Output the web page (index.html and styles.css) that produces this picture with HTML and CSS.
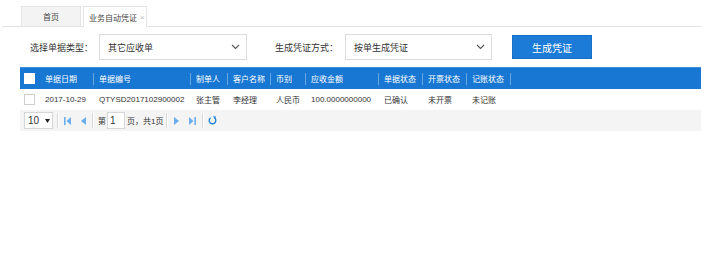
FILE: index.html
```html
<!DOCTYPE html>
<html lang="zh-CN">
<head>
<meta charset="utf-8">
<title>业务自动凭证</title>
<link rel="stylesheet" href="styles.css">
</head>
<body>
<div class="tabs">
  <div class="tab">首页</div>
  <div class="tab active">业务自动凭证<span class="close">×</span></div>
</div>

<div class="toolbar">
  <span class="label">选择单据类型：</span>
  <div class="select s1"><span>其它应收单</span>
    <svg class="chev" width="9" height="6" viewBox="0 0 9 6"><polyline points="1,1 4.5,4.5 8,1" fill="none" stroke="#555" stroke-width="1.1"/></svg>
  </div>
  <span class="label l2">生成凭证方式：</span>
  <div class="select s2"><span>按单生成凭证</span>
    <svg class="chev" width="9" height="6" viewBox="0 0 9 6"><polyline points="1,1 4.5,4.5 8,1" fill="none" stroke="#555" stroke-width="1.1"/></svg>
  </div>
  <button class="btn">生成凭证</button>
</div>

<div class="grid">
  <div class="row head">
    <div class="c c0"><span class="cb white"></span></div>
    <div class="c c1">单据日期</div>
    <div class="c c2 sep">单据编号</div>
    <div class="c c3 sep">制单人</div>
    <div class="c c4 sep">客户名称</div>
    <div class="c c5 sep">币别</div>
    <div class="c c6 sep">应收金额</div>
    <div class="c c7 sep">单据状态</div>
    <div class="c c8 sep">开票状态</div>
    <div class="c c9 sep">记账状态</div>
    <div class="c cend sep"></div>
  </div>
  <div class="row data">
    <div class="c c0"><span class="cb"></span></div>
    <div class="c c1">2017-10-29</div>
    <div class="c c2">QTYSD2017102900002</div>
    <div class="c c3">张主管</div>
    <div class="c c4">李经理</div>
    <div class="c c5">人民币</div>
    <div class="c c6">100.0000000000</div>
    <div class="c c7">已确认</div>
    <div class="c c8">未开票</div>
    <div class="c c9">未记账</div>
  </div>
  <div class="pager">
    <div class="psel">10<svg class="caret" width="5" height="4" viewBox="0 0 5 4"><polygon points="0,0 5,0 2.5,4" fill="#222"/></svg></div>
    <span class="psep"></span>
    <span class="pbtn"><svg width="7" height="8" viewBox="0 0 7 8"><rect x="0" y="0" width="1.6" height="8" fill="#6aaeee"/><polygon points="7,0 2.5,4 7,8" fill="#6aaeee"/></svg></span>
    <span class="pbtn"><svg width="5" height="8" viewBox="0 0 5 8"><polygon points="5,0 0,4 5,8" fill="#6aaeee"/></svg></span>
    <span class="psep s-b"></span>
    <span class="ptxt t1">第</span>
    <span class="pinput">1</span>
    <span class="ptxt t2">页，共1页</span>
    <span class="psep s-c"></span>
    <span class="pbtn"><svg width="5" height="8" viewBox="0 0 5 8"><polygon points="0,0 5,4 0,8" fill="#6aaeee"/></svg></span>
    <span class="pbtn"><svg width="7" height="8" viewBox="0 0 7 8"><polygon points="0,0 4.5,4 0,8" fill="#6aaeee"/><rect x="5.4" y="0" width="1.6" height="8" fill="#6aaeee"/></svg></span>
    <span class="psep s-d"></span>
    <span class="pbtn"><svg width="9" height="9" viewBox="0 0 9 9"><path d="M6.4 1.8 A3.3 3.3 0 1 1 2.6 1.8" fill="none" stroke="#2284dc" stroke-width="1.4"/><polygon points="4.9,0.3 8,0.4 7,3.2" fill="#2284dc"/></svg></span>
  </div>
</div>
</body>
</html>
```

FILE: styles.css
```css
html, body {
  margin: 0;
  padding: 0;
  background: #fff;
}
body {
  width: 701px;
  height: 254px;
  overflow: hidden;
  font-family: "Liberation Sans", "Noto Sans CJK SC", sans-serif;
  color: #333;
}

.tabs {
  display: flex;
  align-items: flex-end;
  height: 26px;
  margin-left: 2px;
  padding-left: 19px;
  border-bottom: 1px solid #e2e2e2;
  box-sizing: content-box;
}
.tab {
  box-sizing: border-box;
  width: 60px;
  height: 20px;
  background: #f3f3f3;
  border: 1px solid #e4e4e4;
  border-bottom: none;
  font-size: 8px;
  color: #444;
  display: flex;
  align-items: center;
  justify-content: center;
}
.tab.active {
  width: 64px;
  height: 21px;
  margin-left: 2px;
  margin-bottom: -1px;
  background: #fff;
  justify-content: flex-start;
  padding-left: 5px;
}
.close {
  color: #bbb;
  font-size: 8px;
  margin-left: 3px;
}

.toolbar {
  display: flex;
  align-items: center;
  height: 26px;
  margin-top: 7px;
  padding-left: 30px;
}
.label {
  width: 69px;
  font-size: 9px;
  color: #333;
  white-space: nowrap;
}
.label.l2 {
  margin-left: 28px;
  width: 70px;
}
.select {
  box-sizing: border-box;
  height: 26px;
  border: 1px solid #dcdcdc;
  display: flex;
  align-items: center;
  justify-content: space-between;
  padding: 0 6px 0 8px;
  font-size: 9px;
  color: #333;
}
.select.s1 { width: 148px; }
.select.s2 { width: 147px; }
.chev { display: block; }

.btn {
  box-sizing: border-box;
  margin-left: 20px;
  width: 80px;
  height: 24px;
  background: #1b7bd6;
  border: 1px solid #1670c8;
  color: #fff;
  font-family: "Liberation Sans", "Noto Sans CJK SC", sans-serif;
  font-size: 10px;
  padding: 0;
}

.grid {
  margin-top: 7px;
  margin-left: 20px;
}
.row {
  display: flex;
  align-items: center;
  font-size: 8px;
}
.row.head {
  height: 22px;
  background: #1777d2;
  border-top: 1px solid #3d8fdc;
  box-sizing: border-box;
  color: #fff;
}
.row.data {
  height: 21px;
  background: #fff;
  color: #333;
}
.c {
  box-sizing: border-box;
  height: 100%;
  display: flex;
  align-items: center;
  padding-left: 6px;
  white-space: nowrap;
  flex-shrink: 0;
}
.sep {
  background: linear-gradient(rgba(255,255,255,0.35), rgba(255,255,255,0.35)) no-repeat left center / 1px 12px;
}
.c0 { width: 20px; padding-left: 4px; }
.c1 { width: 53px; padding-left: 5px; }
.c2 { width: 97px; }
.c3 { width: 37px; }
.c4 { width: 43px; }
.c5 { width: 35px; }
.c6 { width: 73px; }
.c7 { width: 44px; }
.c8 { width: 44px; }
.c9 { width: 44px; }
.cend { width: 10px; }

.cb {
  box-sizing: border-box;
  width: 11px;
  height: 11px;
  border: 1px solid #cfcfcf;
  background: #fff;
  display: block;
}
.cb.white { border-color: #fff; }

.pager {
  height: 21px;
  background: #f4f4f4;
  display: flex;
  align-items: center;
  padding-left: 4px;
  font-size: 8px;
  color: #333;
}
.psel {
  box-sizing: border-box;
  width: 29px;
  height: 17px;
  background: #fff;
  border: 1px solid #d6d6d6;
  display: flex;
  align-items: center;
  padding-left: 3px;
  font-size: 10px;
  color: #333;
}
.caret {
  display: block;
  margin-left: 6px;
}
.psep {
  width: 1px;
  height: 15px;
  background: #dadada;
  border-right: 1px solid #fff;
  margin-left: 4px;
}
.psep.s-b { margin-left: 1px; }
.psep.s-c { margin-left: 3px; }
.psep.s-d { margin-left: 2px; }
.pbtn {
  width: 16px;
  height: 17px;
  display: flex;
  align-items: center;
  justify-content: center;
}
.ptxt.t1 { margin-left: 4px; }
.pinput {
  box-sizing: border-box;
  width: 18px;
  height: 17px;
  margin-left: 1px;
  background: #fff;
  border: 1px solid #d6d6d6;
  display: flex;
  align-items: center;
  padding-left: 2px;
  font-size: 10px;
}
.ptxt.t2 { margin-left: 2px; }
```
